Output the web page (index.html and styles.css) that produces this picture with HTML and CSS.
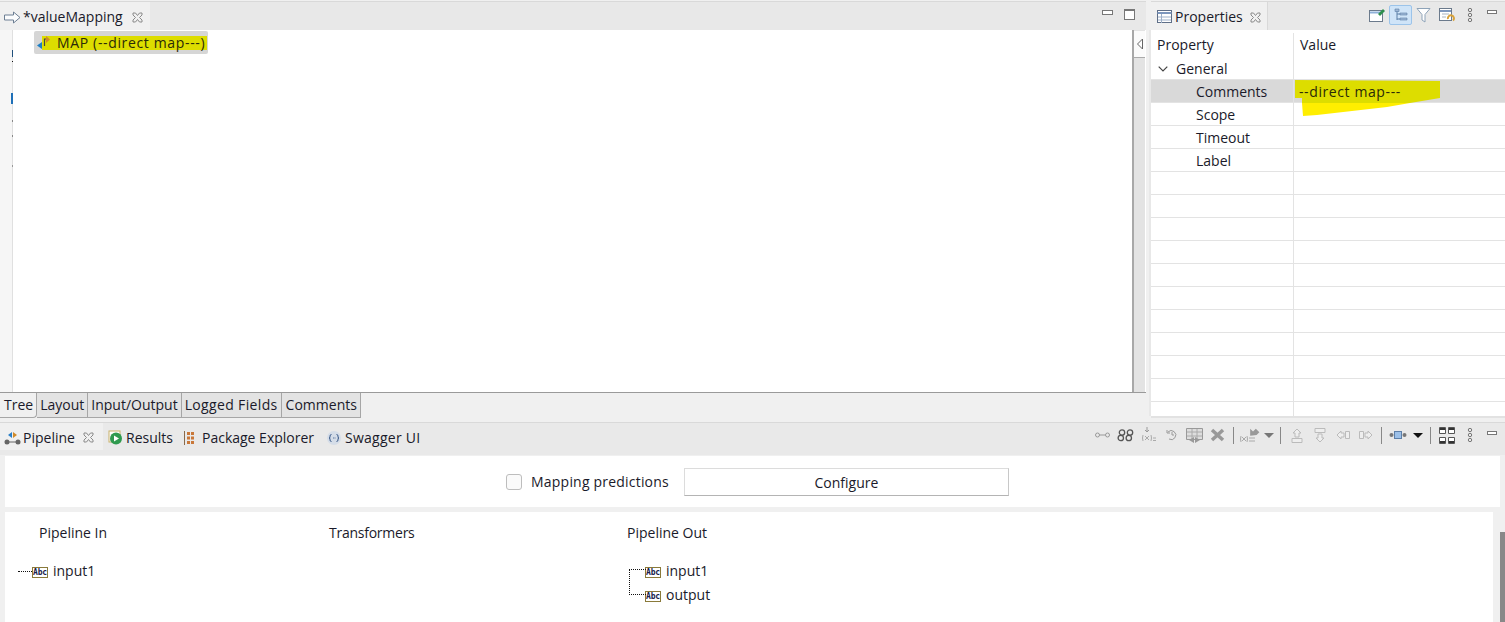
FILE: index.html
```html
<!DOCTYPE html>
<html lang="en">
<head>
<meta charset="utf-8">
<title>valueMapping</title>
<link rel="stylesheet" href="styles.css">
</head>
<body>
<div class="app">
  <div class="top">
    <section class="editor">
      <header class="tabbar">
        <div class="tab active editor-tab">
          <svg class="ico" width="17" height="13" viewBox="0 0 17 13"><path d="M.5 4h9V1L16 6.500 9.500 12V9h-9z" fill="#fbfcfd" stroke="#6d7f94"/></svg>
          <span>*valueMapping</span>
          <svg class="close" width="11" height="11" viewBox="0 0 11 11"><path d="M1 1h2.500l2 2.500 2-2.500H10v2L7.500 5.500 10 8v2H7.500l-2-2.500-2 2.500H1V8l2.500-2.500L1 3z" fill="none" stroke="#8a8a8a"/></svg>
        </div>
        <div class="spacer"></div>
        <div class="min"></div>
        <div class="max"></div>
      </header>
      <div class="editor-body">
        <div class="gutter">
          <i class="mark m1"></i><i class="mark m2"></i><i class="mark m3"></i><i class="mark m4"></i><i class="mark m5"></i><i class="mark m6"></i>
        </div>
        <div class="canvas">
          <div class="step">
            <div class="step-hl">
              <svg width="15" height="16" viewBox="0 0 15 16"><path d="M8.500 11V4H12" fill="none" stroke="#444" stroke-width="1.200"/><path d="M10 1l4 3.500L10 8z" fill="#d08a2a"/><path d="M1 10.500L6 7v7z" fill="#1f7fc4"/></svg>
              <span class="step-text">MAP (--direct map---)</span>
            </div>
          </div>
        </div>
        <div class="collapse-strip">
          <div class="collapse-btn"><svg width="8" height="12" viewBox="0 0 8 12"><path d="M6.500 1L1.500 6l5 5z" fill="#fff" stroke="#666"/></svg></div>
        </div>
      </div>
      <nav class="subtabs">
        <span class="subtab first">Tree</span>
        <span class="subtab">Layout</span>
        <span class="subtab">Input/Output</span>
        <span class="subtab">Logged Fields</span>
        <span class="subtab">Comments</span>
      </nav>
    </section>

    <section class="props">
      <header class="tabbar">
        <div class="tab active props-tab">
          <svg class="ico" width="15" height="14" viewBox="0 0 15 14"><rect x=".5" y=".5" width="14" height="12" fill="#fff" stroke="#5f6f88"/><path d="M.5 3h14" stroke="#7d97bd" stroke-width="2"/><path d="M4.500 4v9M1 7h13M1 10h13" stroke="#9db0c9"/></svg>
          <span>Properties</span>
          <svg class="close" width="11" height="11" viewBox="0 0 11 11"><path d="M1 1h2.500l2 2.500 2-2.500H10v2L7.500 5.500 10 8v2H7.500l-2-2.500-2 2.500H1V8l2.500-2.500L1 3z" fill="none" stroke="#8a8a8a"/></svg>
        </div>
        <div class="spacer"></div>
        <div class="tools">
          <span class="slot"><svg width="17" height="16" viewBox="0 0 17 16"><rect x=".5" y="3.500" width="13" height="11" fill="#fff" stroke="#6b7a8c"/><path d="M1 5.500h12" stroke="#8fb0d8" stroke-width="2"/><path d="M9 7l5-5 2 2-5 5z" fill="#2f8f4e"/></svg></span>
          <span class="slot tool-on"><svg width="14" height="14" viewBox="0 0 14 14"><path d="M3 2v10M3 6h3M3 11h3" stroke="#5b7ea6" fill="none"/><path d="M1 1h4v2.500H1zM6 5h7v2H6zM6 10h7v2H6z" fill="#9fb8d6" stroke="#5b7ea6" stroke-width=".6"/></svg></span>
          <span class="slot"><svg width="15" height="16" viewBox="0 0 15 16"><path d="M1 1.500h13L9 7.500V15l-3-2V7.500z" fill="#fff" stroke="#8ea3b8"/></svg></span>
          <span class="slot"><svg width="16" height="16" viewBox="0 0 16 16"><rect x=".5" y="1.500" width="12" height="12" fill="#fff" stroke="#6b7a8c"/><path d="M1 4h11" stroke="#7d97bd" stroke-width="2"/><path d="M3 7h7M3 10h4" stroke="#a9b4c0"/><path d="M9 12a3 3 0 1 1 5 1.500" fill="none" stroke="#d8a23a" stroke-width="2"/></svg></span>
          <span class="slot"><svg width="6" height="14" viewBox="0 0 6 14"><circle cx="3" cy="2" r="1.700" fill="none" stroke="#777"/><circle cx="3" cy="7" r="1.700" fill="none" stroke="#777"/><circle cx="3" cy="12" r="1.700" fill="none" stroke="#777"/></svg></span>
          <div class="min end-min"></div>
        </div>
      </header>
      <div class="prop-table">
        <div class="row head"><span class="c1">Property</span><span class="c2">Value</span></div>
        <div class="row"><span class="c1 lvl1"><svg class="chev" width="10" height="6" viewBox="0 0 10 6"><path d="M.7.700L5 5 9.300.7" fill="none" stroke="#444" stroke-width="1.200"/></svg>General</span><span class="c2"></span></div>
        <div class="row selected"><span class="c1 lvl2">Comments</span><span class="c2"><span class="dashed">--direct map---</span></span>
          <svg class="scribble" width="147" height="37" viewBox="0 0 147 37"><path d="M1 0l145 1v17l-30 5H8v-5H1z" fill="#dddd00"/><path d="M8 23h108l-23 4-70 8-14 1z" fill="#ffee00"/></svg>
        </div>
        <div class="row"><span class="c1 lvl2">Scope</span><span class="c2"></span></div>
        <div class="row"><span class="c1 lvl2">Timeout</span><span class="c2"></span></div>
        <div class="row"><span class="c1 lvl2">Label</span><span class="c2"></span></div>
        <div class="row"><span class="c1"></span><span class="c2"></span></div>
        <div class="row"><span class="c1"></span><span class="c2"></span></div>
        <div class="row"><span class="c1"></span><span class="c2"></span></div>
        <div class="row"><span class="c1"></span><span class="c2"></span></div>
        <div class="row"><span class="c1"></span><span class="c2"></span></div>
        <div class="row"><span class="c1"></span><span class="c2"></span></div>
        <div class="row"><span class="c1"></span><span class="c2"></span></div>
        <div class="row"><span class="c1"></span><span class="c2"></span></div>
        <div class="row"><span class="c1"></span><span class="c2"></span></div>
        <div class="row"><span class="c1"></span><span class="c2"></span></div>
        <div class="row"><span class="c1"></span><span class="c2"></span></div>
      </div>
    </section>
  </div>

  <section class="pipeline">
    <header class="tabbar low">
      <div class="tab active pipe-tab">
        <svg class="ico" width="17" height="14" viewBox="0 0 17 14"><circle cx="3" cy="11" r="2.500" fill="#666"/><circle cx="14" cy="11" r="2.500" fill="#666"/><path d="M3 11h11" stroke="#666"/><path d="M8 1L4 4l4 3z" fill="#2a7fc8"/><path d="M9 1l4 3-4 3z" fill="#d08a2a"/></svg>
        <span>Pipeline</span>
        <svg class="close" width="11" height="11" viewBox="0 0 11 11"><path d="M1 1h2.500l2 2.500 2-2.500H10v2L7.500 5.500 10 8v2H7.500l-2-2.500-2 2.500H1V8l2.500-2.500L1 3z" fill="none" stroke="#8a8a8a"/></svg>
      </div>
      <div class="tab">
        <svg class="ico" width="15" height="15" viewBox="0 0 15 15"><rect x="1" y="1" width="11" height="11" fill="#fff" stroke="#c9b26a"/><circle cx="8" cy="8.500" r="6" fill="#2f9a4f"/><path d="M6 5.500l5 3-5 3z" fill="#fff"/></svg>
        <span>Results</span>
      </div>
      <div class="tab pkg-tab">
        <svg class="ico" width="11" height="14" viewBox="0 0 11 14"><path d="M1.500 0v14" stroke="#8a6a4a"/><path d="M4 1h3v3H4zM8 1h3v3H8zM4 5.500h3v3H4zM8 5.500h3v3H8zM4 10h3v3H4zM8 10h3v3H8z" fill="#c9783a"/></svg>
        <span>Package Explorer</span>
      </div>
      <div class="tab swagger-tab">
        <svg class="ico" width="14" height="14" viewBox="0 0 14 14"><circle cx="7" cy="7" r="7" fill="#d5dde8"/><path d="M4.500 3.500Q3 3.500 3 5v1.500L2 7l1 .5V9q0 1.500 1.500 1.500M9.500 3.500Q11 3.500 11 5v1.500l1 .5-1 .5V9q0 1.500-1.500 1.500" fill="none" stroke="#3a5a8a"/><path d="M6 7h.8M7.600 7h.8" stroke="#3a5a8a"/></svg>
        <span>Swagger UI</span>
      </div>
      <div class="spacer"></div>
      <div class="tools">
        <span class="slot"><svg width="15" height="6" viewBox="0 0 15 6"><circle cx="2.500" cy="3" r="2" fill="none" stroke="#999"/><circle cx="12.500" cy="3" r="2" fill="none" stroke="#999"/><path d="M4.500 3h6" stroke="#999"/></svg></span>
        <span class="slot"><svg width="17" height="13" viewBox="0 0 17 13"><g fill="none" stroke="#555" stroke-width="1.300"><ellipse cx="5" cy="3.500" rx="2.700" ry="2.700"/><ellipse cx="3.800" cy="9" rx="2.700" ry="2.700"/><ellipse cx="13" cy="3.500" rx="2.700" ry="2.700"/><ellipse cx="11.800" cy="9" rx="2.700" ry="2.700"/></g></svg></span>
        <span class="slot"><svg width="15" height="16" viewBox="0 0 15 16"><path d="M6 0v5M4 3l2 2 2-2" fill="none" stroke="#999"/><path d="M2 8q-1 3 0 6M10 8q1 3 0 6M4 9l4 4M8 9l-4 4M12 11h3M12 13.500h3" fill="none" stroke="#aaa"/></svg></span>
        <span class="slot"><svg width="12" height="12" viewBox="0 0 12 12"><path d="M2 3a4.500 4.500 0 1 1 1 7" fill="none" stroke="#999"/><path d="M1 1v3h3M6 3v3h2" fill="none" stroke="#999"/></svg></span>
        <span class="slot"><svg width="17" height="15" viewBox="0 0 17 15"><path d="M.5.500h16v11H.5z" fill="#ddd" stroke="#999"/><path d="M6 1v10M11 1v10M1 4h15M1 8h15" stroke="#aaa"/><path d="M3 12l5-3v6zM14 12l-5-3v6z" fill="#999"/></svg></span>
        <span class="slot"><svg width="15" height="14" viewBox="0 0 15 14"><path d="M2 2l11 10M13 2L2 12" stroke="#999" stroke-width="3.500"/></svg></span>
        <i class="sep"></i>
        <span class="slot"><svg width="21" height="17" viewBox="0 0 21 17"><path d="M10 6l5-5v4h4v5h-4z" fill="#999" transform="rotate(-45 14 6)"/><path d="M2 9q-1 3 0 6M8 9q1 3 0 6M3 10l4 4M7 10l-4 4M10 11h6M10 14h6" fill="none" stroke="#aaa"/></svg></span>
        <span class="drop-slot"><svg width="10" height="5" viewBox="0 0 10 5"><path d="M0 0h10L5 5z" fill="#777"/></svg></span>
        <i class="sep"></i>
        <span class="slot"><svg width="12" height="15" viewBox="0 0 12 15"><path d="M6 1l4 4H8v4H4V5H2z" fill="#eee" stroke="#bbb"/><path d="M1 10.500h10v4H1z" fill="#eee" stroke="#bbb"/></svg></span>
        <span class="slot"><svg width="12" height="15" viewBox="0 0 12 15"><path d="M6 14l4-4H8V6H4v4H2z" fill="#eee" stroke="#bbb"/><path d="M1 .500h10v4H1z" fill="#eee" stroke="#bbb"/></svg></span>
        <span class="slot"><svg width="14" height="10" viewBox="0 0 14 10"><path d="M1 5l4-4v2h3v4H5v2z" fill="#eee" stroke="#bbb"/><path d="M9.500 1.500h4v7h-4z" fill="#eee" stroke="#bbb"/></svg></span>
        <span class="slot"><svg width="14" height="10" viewBox="0 0 14 10"><path d="M13 5L9 1v2H6v4h3v2z" fill="#eee" stroke="#bbb"/><path d="M.5 1.500h4v7h-4z" fill="#eee" stroke="#bbb"/></svg></span>
        <i class="sep"></i>
        <span class="slot"><svg width="18" height="8" viewBox="0 0 18 8"><circle cx="2.500" cy="4" r="2" fill="#777"/><circle cx="15.500" cy="4" r="2" fill="#777"/><rect x="5.500" y=".5" width="7" height="7" fill="#9cc0e8" stroke="#5d7fa8"/></svg></span>
        <span class="drop-slot wide"><svg width="10" height="5" viewBox="0 0 10 5"><path d="M0 0h10L5 5z" fill="#111"/></svg></span>
        <i class="sep"></i>
        <span class="slot"><svg width="16" height="17" viewBox="0 0 16 17"><path d="M.5.500h6v6h-6zM9.500.500h6v6h-6zM.5 10.500h6v6h-6zM9.500 10.500h6v6h-6z" fill="#fff" stroke="#555"/><path d="M1 1h5v2H1zM10 1h5v2h-5zM1 14h5v2H1zM10 14h5v2h-5z" fill="#333"/></svg></span>
        <span class="slot"><svg width="6" height="14" viewBox="0 0 6 14"><circle cx="3" cy="2" r="1.700" fill="none" stroke="#777"/><circle cx="3" cy="7" r="1.700" fill="none" stroke="#777"/><circle cx="3" cy="12" r="1.700" fill="none" stroke="#777"/></svg></span>
        <div class="min end-min"></div>
      </div>
    </header>
    <div class="predict-bar">
      <span class="check"></span>
      <span class="predict-label">Mapping predictions</span>
      <span class="configure">Configure</span>
    </div>
    <div class="pipe-body">
      <div class="pipe-col col-in">
        <div class="col-title">Pipeline In</div>
        <div class="node"><i class="dots"></i><i class="abc">Abc</i><span>input1</span></div>
      </div>
      <div class="pipe-col col-trans">
        <div class="col-title narrow">Transformers</div>
      </div>
      <div class="pipe-col col-out">
        <div class="col-title">Pipeline Out</div>
        <div class="out-tree">
          <div class="node"><i class="abc">Abc</i><span>input1</span></div>
          <div class="node"><i class="abc">Abc</i><span>output</span></div>
        </div>
      </div>
      <div class="scroll"></div>
    </div>
  </section>
</div>
</body>
</html>
```
FILE: styles.css
```css
* { box-sizing: border-box; }
html, body { margin: 0; height: 100%; overflow: hidden; }
body {
  background: #f0f0f0;
  color: #1a1a2a;
  font: 14px/20px "Open Sans", "Noto Sans", sans-serif;
}
.app { width: 1505px; height: 622px; display: flex; flex-direction: column; }
.top { display: flex; gap: 5px; height: 418px; padding-top: 1px; }
.editor { width: 1146px; display: flex; flex-direction: column; }
.props { flex: 1; display: flex; flex-direction: column; background: #fff; border-bottom: 2px solid #e2e2e2; min-height: 0; }

.tabbar { height: 29px; flex: none; display: flex; align-items: stretch; background: #e8e8e8; border-top: 1px solid #d9d9d9; }
.tabbar.low { height: 33px; padding-bottom: 5px; background: #e9e9e9; margin-top: 4px; }
.spacer { flex: 1; }
.tab { display: flex; align-items: center; gap: 3px; padding: 2px 5px 0; white-space: nowrap; }
.tab.active { background: #f0f0f0; }
.editor-tab { width: 150px; padding-left: 4px; gap: 2px; }
.editor-tab .close { margin-left: 7px; }
.props-tab { width: 117px; padding-left: 6px; gap: 3px; border-right: 1px solid #d9d9d9; }
.props-tab .close { margin-left: 4px; }
.pipe-tab { width: 103px; gap: 2px; padding-left: 4px; }
.pipe-tab .close { margin-left: 6px; }
.pkg-tab { gap: 8px; }
.swagger-tab { padding-left: 8px; gap: 4px; }
.swagger-tab span { letter-spacing: .25px; }
.close { flex: none; }
.ico { flex: none; }
.min { width: 11px; height: 5px; border: 1px solid #777; background: #fff; align-self: flex-start; margin: 8px 12px 0 0; }
.max { width: 11px; height: 11px; border: 1px solid #777; border-top-width: 2px; background: #fff; align-self: flex-start; margin: 7px 11px 0 -1px; }
.tools { display: flex; align-items: center; padding-bottom: 2px; }
.low .tools { padding-bottom: 3px; }
.slot { width: 23px; height: 20px; flex: none; display: flex; align-items: center; justify-content: center; }
.tool-on { border: 1px solid #9cc4ea; border-radius: 2px; background: #cfe4f8; }
.drop-slot { width: 15px; flex: none; display: flex; justify-content: center; }
.drop-slot.wide { width: 17px; }
.sep { width: 1px; height: 17px; background: #888; flex: none; margin: 0 4px; }
.end-min { margin: 8px 8px 0 6px; width: 10px; height: 4px; }

.editor-body { flex: 1; display: flex; background: #fff; min-height: 0; }
.gutter { width: 13px; background: #f6f6f6; border-right: 1px solid #e0e0e0; position: relative; }
.mark { position: absolute; right: -1px; width: 1px; }
.m1 { top: 20px; height: 7px; background: #20507c; }
.m2 { top: 31px; height: 1px; background: #111; }
.m3 { top: 63px; height: 11px; width: 2px; right: -1px; background: #1f70b8; }
.m4 { top: 90px; height: 2px; background: #888; }
.m5 { top: 105px; height: 2px; background: #888; }
.m6 { top: 135px; height: 2px; background: #999; }
.canvas { flex: 1; padding: 1px 0 0 21px; }
.step { display: flex; align-items: center; height: 23px; background: #d6d6d6; border-radius: 2px; padding: 0 1px 0 8px; width: 174px; }
.step-hl { flex: 1; height: 14px; background: #dddd00; display: flex; align-items: center; }
.step-hl svg { flex: none; margin-left: -6px; }
.step-text { padding-left: 6px; color: #2a2a08; letter-spacing: .65px; white-space: nowrap; }
.collapse-strip { width: 14px; background: #e3e3e3; border-left: 2px solid #a8a8a8; border-right: 1px solid #fff; }
.collapse-btn { height: 27px; margin-top: 1px; background: #fbfbfb; border-bottom: 1px solid #aaa; display: flex; align-items: center; justify-content: center; }
.subtabs { height: 26px; flex: none; display: flex; background: #f0f0f0; border-top: 1px solid #9a9a9a; }
.subtab { background: #e3e3e3; border-right: 1px solid #a6a6a6; border-bottom: 1px solid #a6a6a6; padding: 0 3px; height: 25px; line-height: 23px; }
.subtab.first { background: #f0f0f0; border-radius: 0 0 4px 0; padding: 0 3px 0 4px; }
.subtab:nth-child(4) { letter-spacing: .35px; }
.subtab:nth-child(5) { padding: 0 3px 0 4px; }

.prop-table { flex: 1; overflow: hidden; padding-top: 3px; border-left: 2px solid #e8e8e8; margin-left: -2px; }
.row { display: flex; height: 23px; line-height: 22px; border-bottom: 1px solid #e3e3e3; position: relative; }
.row.head { height: 24px; border-bottom: 0; }
.row.selected { background: #d9d9d9; }
.c1 { width: 143px; flex: none; border-right: 1px solid #e3e3e3; padding-left: 6px; display: flex; align-items: center; }
.c2 { flex: 1; padding-left: 6px; position: relative; z-index: 1; line-height: 24px; }
.lvl1 { padding-left: 7px; padding-top: 2px; gap: 8px; }
.lvl2 { padding-left: 45px; padding-top: 2px; }
.selected .c2 { padding-left: 5px; }
.dashed { letter-spacing: .6px; color: #2a2a08; }
.scribble { position: absolute; left: 143px; top: 0; }
.chev { flex: none; }

.pipeline { flex: 1; display: flex; flex-direction: column; min-height: 0; }

.predict-bar { height: 51px; flex: none; margin: 1px 5px 0; padding-left: 10px; background: #fff; display: flex; align-items: center; justify-content: center; }
.check { width: 16px; height: 16px; border: 1px solid #bdbdbd; border-radius: 3px; background: #fafafa; margin-right: 9px; }
.predict-label { margin-right: 15px; padding-top: 1px; letter-spacing: .2px; }
.configure { width: 325px; height: 28px; line-height: 28px; border: 1px solid #dcdcdc; border-bottom-color: #b4b4b4; border-right-color: #c8c8c8; text-align: center; background: #fff; }

.pipe-body { flex: 1; margin: 5px 12px 0 5px; background: #fff; display: flex; position: relative; min-height: 0; padding-top: 11px; }
.pipe-col { flex: none; }
.col-in { width: 290px; padding-left: 34px; }
.col-trans { width: 298px; padding-left: 34px; }
.col-out { padding-left: 34px; }
.col-title { height: 20px; margin-bottom: 16px; }
.narrow { letter-spacing: -.25px; }
.node { display: flex; align-items: center; height: 24px; gap: 5px; }
.abc { font: normal bold 8px/9px "DejaVu Sans Mono", monospace; letter-spacing: -.2px; color: #15204a; width: 16px; height: 11px; border: 1px solid #8a7a3a; text-align: center; display: block; flex: none; margin-top: 2px; overflow: hidden; }
.dots { width: 14px; border-top: 1px dotted #111; margin-left: -21px; margin-right: -5px; flex: none; }
.out-tree { position: relative; padding-left: 18px; }
.out-tree::before { content: ""; position: absolute; left: 2px; top: 10px; width: 16px; height: 24px; border: 1px dotted #111; border-right: 0; }
.scroll { position: absolute; right: -12px; top: 20px; bottom: 0; width: 5px; background: #888; }
```
